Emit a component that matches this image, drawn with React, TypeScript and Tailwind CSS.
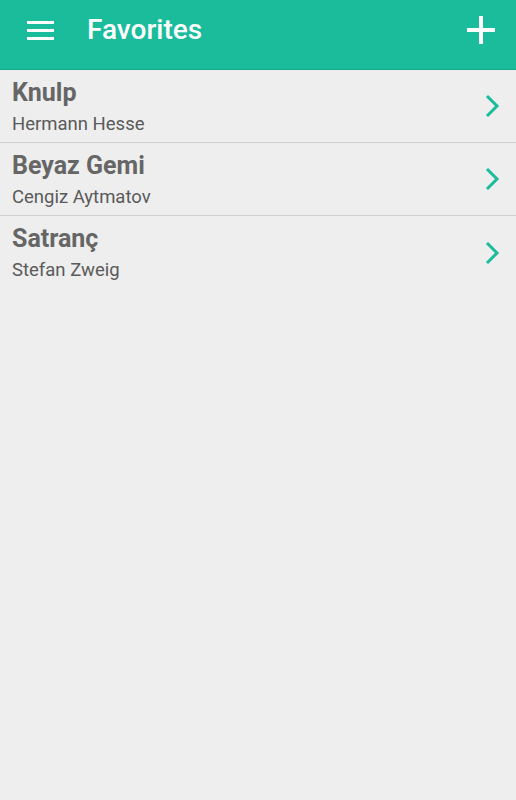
import React from 'react';

const books = [
  { title: 'Knulp', author: 'Hermann Hesse' },
  { title: 'Beyaz Gemi', author: 'Cengiz Aytmatov' },
  { title: 'Satranç', author: 'Stefan Zweig' },
];

function Chevron() {
  return (
    <svg width="16" height="24" viewBox="0 0 16 24" className="shrink-0">
      <path d="M3 2 L13 12 L3 22" fill="none" stroke="#1abc9c" strokeWidth="3" />
    </svg>
  );
}

export default function App() {
  return (
    <div className="min-h-[800px] bg-[#eeeeee] font-['Roboto',sans-serif]">
      {/* header */}
      <div className="flex h-[70px] items-center border-b border-[#17a88b] bg-[#1abc9c] pb-[10px] pl-[27px] pr-[21px]">
        <svg width="27" height="20" viewBox="0 0 27 20">
          <rect x="0" y="1" width="27" height="3" fill="#fff" />
          <rect x="0" y="9" width="27" height="3" fill="#fff" />
          <rect x="0" y="17" width="27" height="3" fill="#fff" />
        </svg>
        <h1 className="ml-[33px] flex-1 text-[28px] font-medium leading-[34px] text-white">Favorites</h1>
        <svg width="28" height="28" viewBox="0 0 28 28">
          <rect x="0" y="12" width="28" height="4" fill="#fff" />
          <rect x="12" y="0" width="4" height="28" fill="#fff" />
        </svg>
      </div>

      {books.map((b, i) => (
        <div
          key={b.title}
          className={
            'flex h-[73px] items-center pl-3 pr-[16px] ' +
            (i < books.length - 1 ? 'border-b border-[#cfcfcf]' : '')
          }
        >
          <div className="flex-1 pt-[2px]">
            <div className="text-[25px] font-bold leading-[30px] text-[#666666]">{b.title}</div>
            <div className="mt-[3px] text-[18.5px] leading-[26px] text-[#5a5a5a]">{b.author}</div>
          </div>
          <Chevron />
        </div>
      ))}
    </div>
  );
}
